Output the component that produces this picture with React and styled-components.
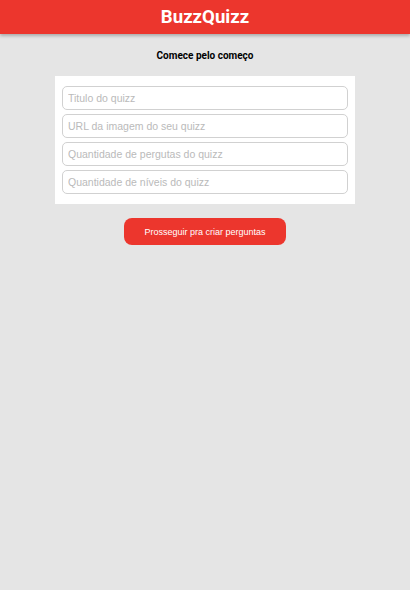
import React from "react";
import styled, { createGlobalStyle } from "styled-components";

const Global = createGlobalStyle`
  html, body { margin: 0; padding: 0; background: #E5E5E5; }
  body { font-family: Roboto, "Liberation Sans", sans-serif; }
  * { box-sizing: border-box; }
`;

const Page = styled.div`
  min-height: 590px;
  background: #E5E5E5;
  display: flex;
  flex-direction: column;
  align-items: center;
`;

const Header = styled.header`
  width: 100%;
  height: 34px;
  background: #EC362D;
  box-shadow: 0 2px 3px rgba(0, 0, 0, 0.25);
  display: flex;
  align-items: center;
  justify-content: center;
`;

const Logo = styled.h1`
  margin: 0;
  color: #fff;
  font-family: Roboto, sans-serif;
  font-weight: 700;
  font-size: 18.6px;
`;

const Heading = styled.h2`
  margin: 15px 0 0;
  font-family: Roboto, sans-serif;
  font-weight: 700;
  font-size: 10px;
  color: #000;
  line-height: 13px;
`;

const Card = styled.div`
  margin-top: 14px;
  width: 300px;
  background: #fff;
  padding: 10px 7px 10px;
  display: flex;
  flex-direction: column;
  gap: 4px;
`;

const Input = styled.input`
  width: 100%;
  height: 24px;
  border: 1px solid #D1D1D1;
  border-radius: 5px;
  padding: 0 5px;
  font-family: "Liberation Sans", Arial, sans-serif;
  font-size: 10.5px;
  outline: none;
  &::placeholder { color: #BABABA; }
`;

const Button = styled.button`
  margin-top: 14px;
  width: 162px;
  height: 27px;
  border: none;
  border-radius: 8px;
  background: #EC362D;
  color: #fff;
  font-family: "Liberation Sans", Arial, sans-serif;
  font-size: 9px;
  cursor: pointer;
`;

export default function App() {
  return (
    <>
      <Global />
      <Page>
        <Header>
          <Logo>BuzzQuizz</Logo>
        </Header>
        <Heading>Comece pelo começo</Heading>
        <Card>
          <Input placeholder="Titulo do quizz" />
          <Input placeholder="URL da imagem do seu quizz" />
          <Input placeholder="Quantidade de pergutas do quizz" />
          <Input placeholder="Quantidade de níveis do quizz" />
        </Card>
        <Button>Prosseguir pra criar perguntas</Button>
      </Page>
    </>
  );
}
